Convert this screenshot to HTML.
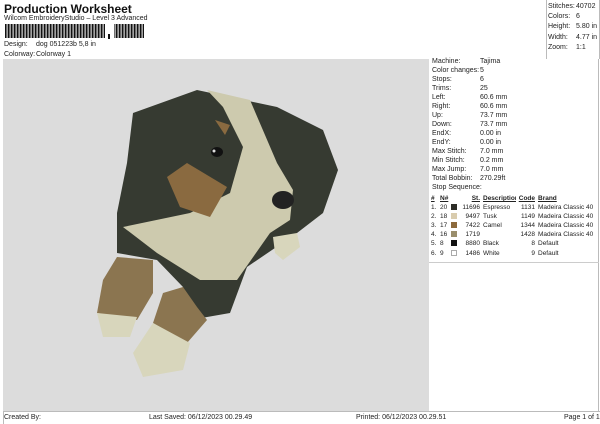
<!DOCTYPE html><html><head><style>
*{margin:0;padding:0;box-sizing:border-box}
body{width:600px;height:424px;background:#fff;font-family:"Liberation Sans",sans-serif;font-size:7px;color:#222;position:relative;overflow:hidden}
.a{position:absolute;white-space:nowrap}
.r{table-layout:fixed;border-collapse:collapse;font-size:6.5px}
.r td{padding:0;height:9.1px;line-height:9.1px;overflow:hidden}
.s{display:inline-block;width:6px;height:6px;vertical-align:-1px}
</style></head><body>
<div class="a" style="left:4px;top:2px;font-size:12px;font-weight:bold;color:#111">Production Worksheet</div>
<div class="a" style="left:4px;top:15px">Wilcom EmbroideryStudio – Level 3 Advanced</div>
<svg class="a" style="left:5px;top:24px" width="140" height="15">
<defs><pattern id="bc" width="3" height="15" patternUnits="userSpaceOnUse"><rect width="1.6" height="15" fill="#111"/><rect x="2.2" width="0.5" height="15" fill="#444"/></pattern></defs>
<rect x="0" y="0" width="100" height="14" fill="url(#bc)"/>
<rect x="109" y="0" width="30" height="14" fill="url(#bc)"/>
<rect x="103" y="10" width="2" height="5" fill="#111"/>
</svg>
<div class="a" style="left:4px;top:41px">Design:</div><div class="a" style="left:36px;top:41px">dog 051223b 5,8 in</div>
<div class="a" style="left:4px;top:51px">Colorway:</div><div class="a" style="left:36px;top:51px">Colorway 1</div>
<div class="a" style="left:546px;top:0;width:54px;height:59px;border-left:1px solid #bbb;border-right:1px solid #bbb"></div>
<div class="a" style="left:548px;top:2px;line-height:10.2px">Stitches:<br>Colors:<br>Height:<br>Width:<br>Zoom:</div>
<div class="a" style="left:576px;top:2px;line-height:10.2px">40702<br>6<br>5.80 in<br>4.77 in<br>1:1</div>
<div class="a" style="left:3px;top:59px;width:426px;height:352px;background:#dcdcdc"></div>
<div class="a" style="left:429px;top:59px;width:170px;height:352px;border-right:1px solid #bbb"></div>
<div class="a" style="left:3px;top:411px;width:597px;height:1px;background:#bbb"></div>
<div class="a" style="left:3px;top:411px;width:1px;height:13px;background:#bbb"></div>
<svg class="a" style="left:3px;top:59px" width="426" height="352" viewBox="3 59 426 352">
<polygon fill="#363a31" points="133,113 197,90 277,107 323,130 338,170 323,213 297,233 247,267 230,313 190,320 183,287 157,260 117,253 117,213 127,163"/>
<polygon fill="#cdcaae" points="207,90 250,100 277,163 293,190 290,220 270,233 237,280 200,280 157,253 123,227 190,213 230,193 243,147 223,107"/>
<polygon fill="#8a6a40" points="167,177 187,163 227,187 210,217 180,207"/>
<polygon fill="#8a6a40" points="215,120 230,125 225,135"/>
<polygon fill="#8b7550" points="117,257 153,260 153,293 137,320 97,313 103,280"/>
<polygon fill="#d8d6bc" points="97,313 137,317 130,337 103,337"/>
<polygon fill="#8b7550" points="183,287 197,307 207,320 187,343 153,323 163,293"/>
<polygon fill="#d8d6bc" points="153,323 190,343 183,370 143,377 133,353"/>
<polygon fill="#d8d6bc" points="273,237 297,233 300,247 283,260 275,253"/>
<ellipse cx="283" cy="200" rx="11" ry="9" fill="#222"/>
<ellipse cx="217" cy="152" rx="6" ry="5" fill="#111"/><circle cx="214" cy="151" r="1.5" fill="#ddd"/>
</svg>
<div class="a" style="left:432px;top:57px;line-height:9px">Machine:<br>Color changes:<br>Stops:<br>Trims:<br>Left:<br>Right:<br>Up:<br>Down:<br>EndX:<br>EndY:<br>Max Stitch:<br>Min Stitch:<br>Max Jump:<br>Total Bobbin:<br>Stop Sequence:</div>
<div class="a" style="left:480px;top:57px;line-height:9px">Tajima<br>5<br>6<br>25<br>60.6 mm<br>60.6 mm<br>73.7 mm<br>73.7 mm<br>0.00 in<br>0.00 in<br>7.0 mm<br>0.2 mm<br>7.0 mm<br>270.29ft</div>
<table class="a r" style="left:431px;top:194px;width:168px">
<colgroup><col style="width:9px"><col style="width:11px"><col style="width:9px"><col style="width:20px"><col style="width:36px"><col style="width:19px"><col style="width:64px"></colgroup>
<tr style="font-weight:bold;text-decoration:underline"><td>#</td><td>N#</td><td></td><td style="text-align:right">St.</td><td style="padding-left:3px">Description</td><td style="text-align:right">Code</td><td style="padding-left:3px">Brand</td></tr>
<tr><td>1.</td><td>20</td><td><span class="s" style="background:#2e2e28"></span></td><td style="text-align:right">11696</td><td style="padding-left:3px">Espresso</td><td style="text-align:right">1131</td><td style="padding-left:3px">Madeira Classic 40</td></tr>
<tr><td>2.</td><td>18</td><td><span class="s" style="background:#d9ccae"></span></td><td style="text-align:right">9497</td><td style="padding-left:3px">Tusk</td><td style="text-align:right">1149</td><td style="padding-left:3px">Madeira Classic 40</td></tr>
<tr><td>3.</td><td>17</td><td><span class="s" style="background:#8c6a3c"></span></td><td style="text-align:right">7422</td><td style="padding-left:3px">Camel</td><td style="text-align:right">1344</td><td style="padding-left:3px">Madeira Classic 40</td></tr>
<tr><td>4.</td><td>16</td><td><span class="s" style="background:#9a8e6c"></span></td><td style="text-align:right">1719</td><td></td><td style="text-align:right">1428</td><td style="padding-left:3px">Madeira Classic 40</td></tr>
<tr><td>5.</td><td>8</td><td><span class="s" style="background:#111"></span></td><td style="text-align:right">8880</td><td style="padding-left:3px">Black</td><td style="text-align:right">8</td><td style="padding-left:3px">Default</td></tr>
<tr><td>6.</td><td>9</td><td><span class="s" style="background:#fff;border:1px solid #aaa"></span></td><td style="text-align:right">1486</td><td style="padding-left:3px">White</td><td style="text-align:right">9</td><td style="padding-left:3px">Default</td></tr>
</table>
<div class="a" style="left:429px;top:262px;width:170px;height:1px;background:#ccc"></div>
<div class="a" style="left:4px;top:414px">Created By:</div>
<div class="a" style="left:149px;top:414px">Last Saved: 06/12/2023 00.29.49</div>
<div class="a" style="left:356px;top:414px">Printed: 06/12/2023 00.29.51</div>
<div class="a" style="left:564px;top:414px">Page 1 of 1</div>
</body></html>
